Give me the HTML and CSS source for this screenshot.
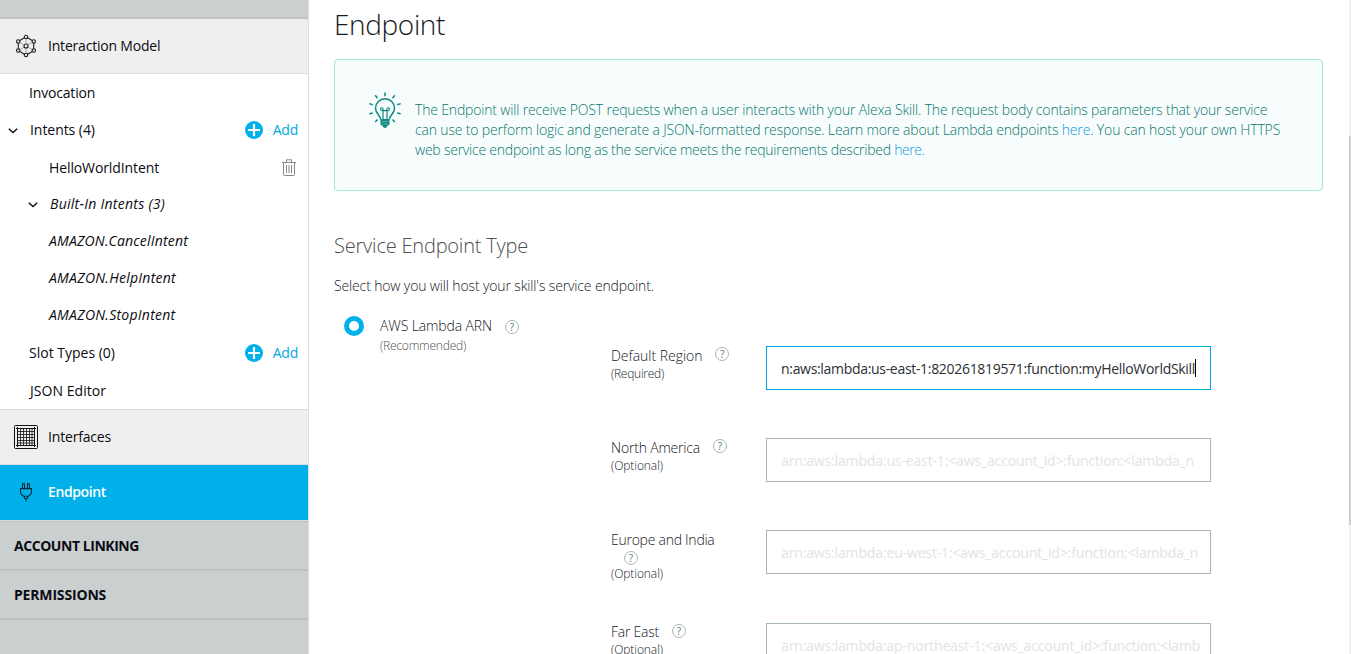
FILE: index.html
```
<!DOCTYPE html>
<html lang="en">
<head>
<meta charset="utf-8">
<title>Endpoint</title>
<link rel="stylesheet" href="styles.css">
</head>
<body>
<div class="app">
  <nav class="sidebar">
    <div class="band"></div>
    <div class="section section-model">
      <svg class="section-icon" width="24" height="24" viewBox="0 0 24 24" fill="none" stroke="#1c1f26" stroke-width="1.1">
        <g stroke-width=".6" stroke="#777"><path d="M12 4v6M12 14v6M5.5 8.2l4.8 2.8M13.7 13l4.8 2.8M18.5 8.2L13.7 11M10.3 13l-4.8 2.8"/></g>
        <path d="M10.3 3.8L5.8 6.5M13.7 3.8l4.5 2.7M10.3 20.2l-4.5-2.7M13.7 20.2l4.5-2.7M4.3 9.3v5.4M19.7 9.3v5.4"/>
        <circle cx="12" cy="3" r="1.7"/><circle cx="12" cy="21" r="1.7"/><circle cx="4.2" cy="7.4" r="1.7"/><circle cx="19.8" cy="7.4" r="1.7"/><circle cx="4.2" cy="16.6" r="1.7"/><circle cx="19.8" cy="16.6" r="1.7"/><circle cx="12" cy="12" r="2"/>
      </svg>
      <span class="t-model">Interaction Model</span>
    </div>
    <div class="tree">
      <div class="row short"><span class="t-tight">Invocation</span></div>
      <div class="row tall lead">
        <svg class="chev" width="10" height="6" viewBox="0 0 10 6"><path d="M.8 .8L5 4.6 9.2 .8" fill="none" stroke="#111" stroke-width="1.5"/></svg>
        <span class="t-intents">Intents (4)</span>
        <span class="add"><svg width="18" height="18" viewBox="0 0 18 18"><circle cx="9" cy="9" r="9" fill="#00b0e8"/><path d="M9 3v12M3 9h12" stroke="#fff" stroke-width="2.2"/></svg><span>Add</span></span>
      </div>
      <div class="row child"><span class="t-hello">HelloWorldIntent</span>
        <svg class="trash" width="14" height="17" viewBox="0 0 14 17" fill="none" stroke="#85858c"><path d="M0 3.5h14M4.5 3V.8h5V3M1.5 3.5v12.2q0 .8.8.8h9.4q.8 0 .8-.8V3.5"/><path d="M4.5 6v8M7 6v8M9.5 6v8"/></svg>
      </div>
      <div class="row short built">
        <svg class="chev" width="10" height="6" viewBox="0 0 10 6"><path d="M.8 .8L5 4.6 9.2 .8" fill="none" stroke="#111" stroke-width="1.5"/></svg>
        <span class="t-built">Built-In Intents (3)</span>
      </div>
      <div class="row tall child italic"><span class="t-cancel">AMAZON.CancelIntent</span></div>
      <div class="row short child italic"><span>AMAZON.HelpIntent</span></div>
      <div class="row tall child italic"><span>AMAZON.StopIntent</span></div>
      <div class="row tall"><span>Slot Types (0)</span>
        <span class="add"><svg width="18" height="18" viewBox="0 0 18 18"><circle cx="9" cy="9" r="9" fill="#00b0e8"/><path d="M9 3v12M3 9h12" stroke="#fff" stroke-width="2.2"/></svg><span>Add</span></span>
      </div>
      <div class="row row-json"><span class="t-json">JSON Editor</span></div>
    </div>
    <div class="section section-interfaces">
      <svg class="section-icon" width="24" height="24" viewBox="0 0 24 24" fill="none" stroke="#111">
        <rect x=".5" y=".5" width="23" height="23" rx="1"/>
        <path d="M2 3.5h20M2 20.5h20M3.5 2v20M20.5 2v20"/>
        <path d="M3 6.5h18M3 9.5h18M3 12.5h18M3 15.5h18M3 18h18M6.5 3v18M9.5 3v18M12.5 3v18M15.5 3v18M18 3v18" stroke-width=".8"/>
      </svg>
      <span class="t-tight">Interfaces</span>
    </div>
    <div class="section section-active">
      <svg class="section-icon" width="24" height="24" viewBox="0 0 24 24" fill="none" stroke="#0b2c3a" stroke-width="1.1">
        <path d="M8.5 8.5V3.7h2v4.8M13.5 8.5V3.7h2v4.8M6.5 8.6h11v3q0 3.600-3.500 4.600h-4q-3.500-1-3.500-4.600zM10 16.200l.7 2.300h2.600l.7-2.300M12 18.500v3"/>
      </svg>
      <span class="t-active">Endpoint</span>
    </div>
    <div class="group group-first"><span class="t-account">ACCOUNT LINKING</span></div>
    <div class="group"><span class="t-perm">PERMISSIONS</span></div>
    <div class="rest"></div>
  </nav>

  <main class="main">
    <h1 class="title">Endpoint</h1>
    <div class="notice">
      <svg class="bulb" width="34" height="37" viewBox="0 0 34 37" fill="none" stroke="#0f8a7e" stroke-width="1.5">
        <path d="M12.600 27.500c0-4-5.100-5.800-5.100-11.300a9.500 9.500 0 0 1 19 0c0 5.500-5.100 7.300-5.100 11.300"/>
        <path d="M15 27.500V18M19 27.500V18" stroke-width="1.2"/><path d="M15.200 18.600q-2.700.2-2.700-1.500 0-1.300 1.300-1.300 1.400 0 1.400 2.800h3.600q0-2.800 1.400-2.800 1.300 0 1.300 1.300 0 1.700-2.700 1.500" stroke-width="1.1"/>
        <path d="M12.500 27h9v5.500q-1 1-2 1.200-1 2.300-2.500 2.300t-2.500-2.300q-1-.2-2-1.200z" fill="#0f8a7e" stroke="none"/><path d="M14 29.500h6M14 32h6" stroke="#7fc4bc" stroke-width=".7"/>
        <path d="M17 .5v3.700M7.200 3.200l2.300 3M26.800 3.200l-2.300 3M1.300 11.600l3.500 1.100M32.700 11.600l-3.500 1.100M1.300 21.800l3.500-.9M32.700 21.800l-3.500-.9M7.200 30l2.300-2.600M26.800 30l-2.300-2.600"/>
      </svg>
      <p class="notice-text"><span class="line line-a">The Endpoint will receive POST requests when a user interacts with your Alexa Skill. The request body contains parameters that your service</span>
      <span class="line line-b">can use to perform logic and generate a JSON-formatted response. Learn more about Lambda endpoints <a class="link">here</a>. You can host your own HTTPS</span>
      <span class="line line-c">web service endpoint as long as the service meets the requirements described <a class="link">here.</a></span></p>
    </div>
    <h2 class="subtitle">Service Endpoint Type</h2>
    <p class="lead-text">Select how you will host your skill's service endpoint.</p>
    <div class="form">
      <div class="choice">
        <span class="radio"></span>
        <div class="choice-text">
          <div class="choice-name"><span class="t-aws">AWS Lambda ARN</span><span class="help">?</span></div>
          <div class="choice-note">(Recommended)</div>
        </div>
      </div>
      <div class="fields">
        <div class="field">
          <div class="label"><div class="name"><span class="t-default">Default Region</span><span class="help">?</span></div><div class="note t-req">(Required)</div></div>
          <div class="input focused"><span class="value">n:aws:lambda:us-east-1:820261819571:function:myHelloWorldSkill</span><span class="caret"></span></div>
        </div>
        <div class="field">
          <div class="label"><div class="name"><span class="t-north">North America</span><span class="help">?</span></div><div class="note">(Optional)</div></div>
          <div class="input"><span class="hint">arn:aws:lambda:us-east-1:&lt;aws_account_id&gt;:function:&lt;lambda_n</span></div>
        </div>
        <div class="field field-long">
          <div class="label"><div class="name wrap"><span class="t-europe">Europe and India</span><span class="help">?</span></div><div class="note">(Optional)</div></div>
          <div class="input"><span class="hint">arn:aws:lambda:eu-west-1:&lt;aws_account_id&gt;:function:&lt;lambda_n</span></div>
        </div>
        <div class="field field-last">
          <div class="label"><div class="name"><span class="t-far">Far East</span><span class="help">?</span></div><div class="note">(Optional)</div></div>
          <div class="input"><span class="hint">arn:aws:lambda:ap-northeast-1:&lt;aws_account_id&gt;:function:&lt;lamb</span></div>
        </div>
      </div>
    </div>
  </main>
  <div class="scrollbar"><div class="thumb"></div></div>
</div>
</body>
</html>
```
FILE: styles.css
```
* { box-sizing: border-box; }
body { margin: 0; font: 14px/20px "Open Sans", "Noto Sans", sans-serif; color: #16191f; background: #fff; overflow: hidden; }
h1, h2, p { margin: 0; }
svg { display: block; flex: none; }
.app { display: flex; height: 654px; overflow: hidden; }

/* Sidebar */
.sidebar { flex: none; display: flex; flex-direction: column; width: 309px; border-right: 1px solid #dcdcdc; white-space: nowrap; color: #0b0b12; }
.band { flex: none; height: 19px; background: #cacfcf; border-bottom: 2px solid #c1c5c5; }
.section { flex: none; display: flex; align-items: center; gap: 10px; height: 55px; padding-left: 14px; background: #efefef; border-bottom: 1px solid #dcdcdc; }
.section-interfaces { height: 56px; border-top: 1px solid #dcdcdc; }
.section-active { height: 56px; padding-bottom: 2px; background: #00b0e8; color: #fff; border-bottom: 1px solid #dcdcdc; }
.tree { flex: none; padding-top: 1px; height: 335px; }
.row { display: flex; align-items: center; height: 37px; padding: 0 10px 0 29px; }
.row.short { height: 36px; }
.row.tall { height: 38px; }
.row.child { padding-left: 49px; padding-right: 12px; }
.row.lead { padding-left: 8px; gap: 12px; }
.row.built { padding-left: 28px; gap: 12px; font-style: italic; letter-spacing: .27px; }
.row-json { padding-left: 30px; }
.italic { font-style: italic; letter-spacing: .26px; }
.chev { margin-top: 2px; }
.add { display: flex; align-items: center; gap: 10px; margin-left: auto; color: #00a8e1; letter-spacing: -.25px; }
.trash { margin-left: auto; }
.t-model { letter-spacing: -.2px; }
.t-tight { letter-spacing: -.18px; }
.t-intents { letter-spacing: -.05px; }
.t-hello { letter-spacing: -.11px; }
.t-cancel { letter-spacing: .18px; }
.t-json { letter-spacing: .05px; }
.t-active { font-weight: 600; letter-spacing: -.38px; }
.group { flex: none; display: flex; align-items: center; height: 49px; padding-left: 14px; background: #cacfcf; border-bottom: 2px solid #c1c1c1; font-weight: 700; }
.group-first { height: 50px; border-top: 1px solid #c1c1c1; }
.t-account { letter-spacing: -.45px; }
.t-perm { letter-spacing: -.17px; }
.rest { flex: 1; background: #cacfcf; }

/* Main column */
.main { flex: 1; min-width: 0; padding: 6px 26px 0 25px; font-weight: 300; }
.title { font-size: 28px; line-height: 36px; font-weight: 300; letter-spacing: -.37px; }
.notice { display: flex; gap: 13px; height: 132px; margin-top: 17px; padding: 32px 0 0 33px; background: #f7fdfd; border: 1px solid #a1e8cc; border-radius: 4px; color: #08766c; }
.notice-text { padding-top: 8px; white-space: nowrap; }
.line { display: block; }
.line-a { letter-spacing: -.172px; }
.line-b { letter-spacing: -.16px; }
.line-c { letter-spacing: -.225px; }
.line-c .link { letter-spacing: -.5px; }
.link { color: #1098e0; }
.subtitle { margin-top: 43px; font-size: 20px; line-height: 24px; font-weight: 300; letter-spacing: -.2px; color: #4c5053; }
.lead-text { margin-top: 18px; letter-spacing: -.14px; }

.form { display: flex; margin-top: 20px; padding-left: 10px; }
.choice { display: flex; gap: 16px; width: 267px; }
.radio { flex: none; width: 20px; height: 20px; border: 5.5px solid #00b0e8; border-radius: 50%; }
.choice-name { display: flex; align-items: center; gap: 13px; height: 20px; }
.choice-note { font-size: 12px; line-height: 20px; letter-spacing: -.21px; color: #4c5053; }
.t-aws { letter-spacing: -.12px; }
.help { flex: none; width: 14px; height: 14px; border: 1px solid #aab7b8; border-radius: 50%; font-size: 10px; line-height: 12px; font-weight: 400; text-align: center; color: #687078; }
.choice .help { margin-top: 2px; }

.fields { padding-top: 30px; }
.field { display: flex; height: 92px; }
.field-long { height: 93px; }
.label { width: 155px; }
.name { display: flex; height: 20px; gap: 13px; }
.name .help { margin-top: 1px; }
.name.wrap { flex-direction: column; gap: 0; height: 36px; }
.name.wrap .help { margin: 1px 0 0 13px; }
.note { font-size: 12px; line-height: 16px; letter-spacing: -.08px; }
.field-last .label { margin-top: -1px; }
.field-last .help { margin-top: 2px; }
.t-default { letter-spacing: -.03px; }
.t-req { letter-spacing: -.26px; }
.t-north { letter-spacing: -.19px; }
.t-europe { letter-spacing: -.26px; }
.t-far { letter-spacing: -.24px; }
.input { display: flex; align-items: center; width: 445px; height: 44px; padding: 2px 15px 0 14px; border: 1px solid #aab7b8; font-weight: 400; white-space: nowrap; }
.focused { padding-right: 13px; border-color: #00a8e1; color: #2b2f36; }
.value { letter-spacing: -.312px; }
.caret { flex: none; width: 1px; height: 18px; margin-top: -3px; background: #000; }
.hint { color: #e2e3e4; letter-spacing: -.145px; }

.scrollbar { flex: none; width: 2px; padding-top: 136px; background: #f0f0f0; }
.thumb { height: 389px; background: #cdcdcd; }
```
